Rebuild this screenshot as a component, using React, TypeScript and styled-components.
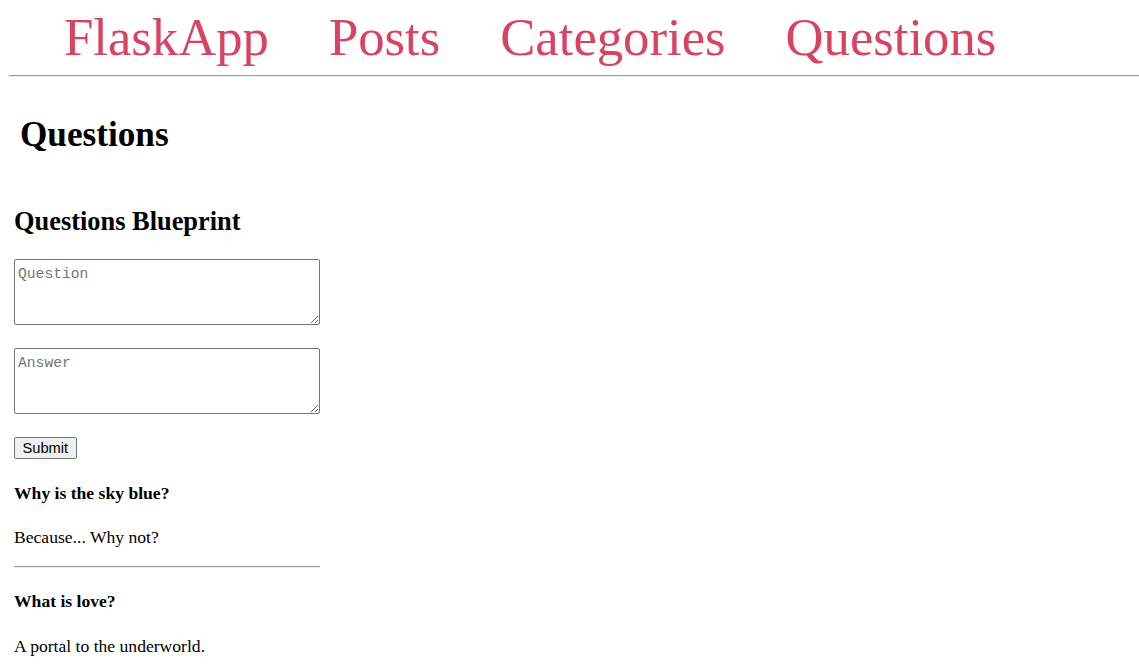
import React from "react";
import styled, { createGlobalStyle } from "styled-components";

const GlobalStyle = createGlobalStyle`
  html, body {
    margin: 0;
    padding: 0;
    background: #ffffff;
  }
  body {
    font-family: "Liberation Serif", "Times New Roman", serif;
    color: #000000;
  }
`;

const Page = styled.div`
  display: flex;
  flex-direction: column;
  overflow: hidden;
`;

const Nav = styled.nav`
  display: flex;
  align-items: baseline;
  gap: 60px;
  padding: 7px 0 0 64px;
`;

const NavLink = styled.a`
  font-family: "Liberation Serif", "Times New Roman", serif;
  font-size: 52.7px;
  line-height: 60px;
  color: #d94361;
  text-decoration: none;
  white-space: nowrap;
`;

const Rule = styled.hr<{ $inset?: number; $width?: string }>`
  box-sizing: content-box;
  height: 0;
  border: 0;
  border-top: 1px solid #9a9a9a;
  border-bottom: 1px solid #eeeeee;
  margin: 0;
  margin-left: ${(p) => p.$inset ?? 0}px;
  width: ${(p) => p.$width ?? "auto"};
`;

const TopRule = styled(Rule)`
  margin-top: 8px;
  margin-right: 0;
`;

const Content = styled.main`
  display: flex;
  flex-direction: column;
  align-items: flex-start;
  padding: 0 0 40px 14px;
`;

const Title = styled.h1`
  margin: 38px 0 0 6px;
  font-size: 35.2px;
  line-height: 40px;
  font-weight: 700;
`;

const Subtitle = styled.h2`
  margin: 51px 0 0 0;
  font-size: 26.4px;
  line-height: 30px;
  font-weight: 700;
`;

const Form = styled.form`
  display: flex;
  flex-direction: column;
  align-items: flex-start;
  gap: 23px;
  margin-top: 23px;
`;

const Field = styled.textarea`
  box-sizing: border-box;
  display: block;
  width: 306px;
  height: 66px;
  margin: 0;
  padding: 6px 3px 2px;
  border: 1px solid #767676;
  border-radius: 2px;
  font-family: "Liberation Mono", "Courier New", monospace;
  font-size: 14.67px;
  line-height: 17px;
  color: #000;
  background: #fff;
  &::placeholder {
    color: #757575;
  }
`;

const SubmitButton = styled.button`
  box-sizing: border-box;
  height: 22px;
  margin: 0;
  padding: 0 7.5px;
  border: 1px solid #767676;
  border-radius: 2px;
  background: #efefef;
  font-family: "Liberation Sans", Arial, sans-serif;
  font-size: 14.67px;
  line-height: 18px;
  color: #000;
`;

const QuestionList = styled.section`
  display: flex;
  flex-direction: column;
  align-items: flex-start;
  margin-top: 24px;
`;

const QuestionText = styled.p<{ $gap: number }>`
  margin: ${(p) => p.$gap}px 0 0 0;
  font-size: 17.6px;
  line-height: 20px;
  font-weight: 700;
`;

const AnswerText = styled.p<{ $gap: number }>`
  margin: ${(p) => p.$gap}px 0 0 0;
  font-size: 17.6px;
  line-height: 20px;
`;

const ItemRule = styled(Rule)`
  margin-top: 19px;
`;

const items = [
  { q: "Why is the sky blue?", a: "Because... Why not?" },
  { q: "What is love?", a: "A portal to the underworld." },
];

export default function App() {
  return (
    <Page>
      <GlobalStyle />
      <Nav>
        <NavLink href="#">FlaskApp</NavLink>
        <NavLink href="#">Posts</NavLink>
        <NavLink href="#">Categories</NavLink>
        <NavLink href="#">Questions</NavLink>
      </Nav>
      <TopRule $inset={9} />
      <Content>
        <Title>Questions</Title>
        <Subtitle>Questions Blueprint</Subtitle>
        <Form onSubmit={(e) => e.preventDefault()}>
          <Field placeholder="Question" />
          <Field placeholder="Answer" />
          <SubmitButton type="submit">Submit</SubmitButton>
        </Form>
        <QuestionList>
          {items.map((item, i) => (
            <React.Fragment key={item.q}>
              {i > 0 && <ItemRule $width="306px" />}
              <QuestionText $gap={i === 0 ? 0 : 23}>{item.q}</QuestionText>
              <AnswerText $gap={i === 0 ? 24 : 25}>{item.a}</AnswerText>
            </React.Fragment>
          ))}
        </QuestionList>
      </Content>
    </Page>
  );
}
